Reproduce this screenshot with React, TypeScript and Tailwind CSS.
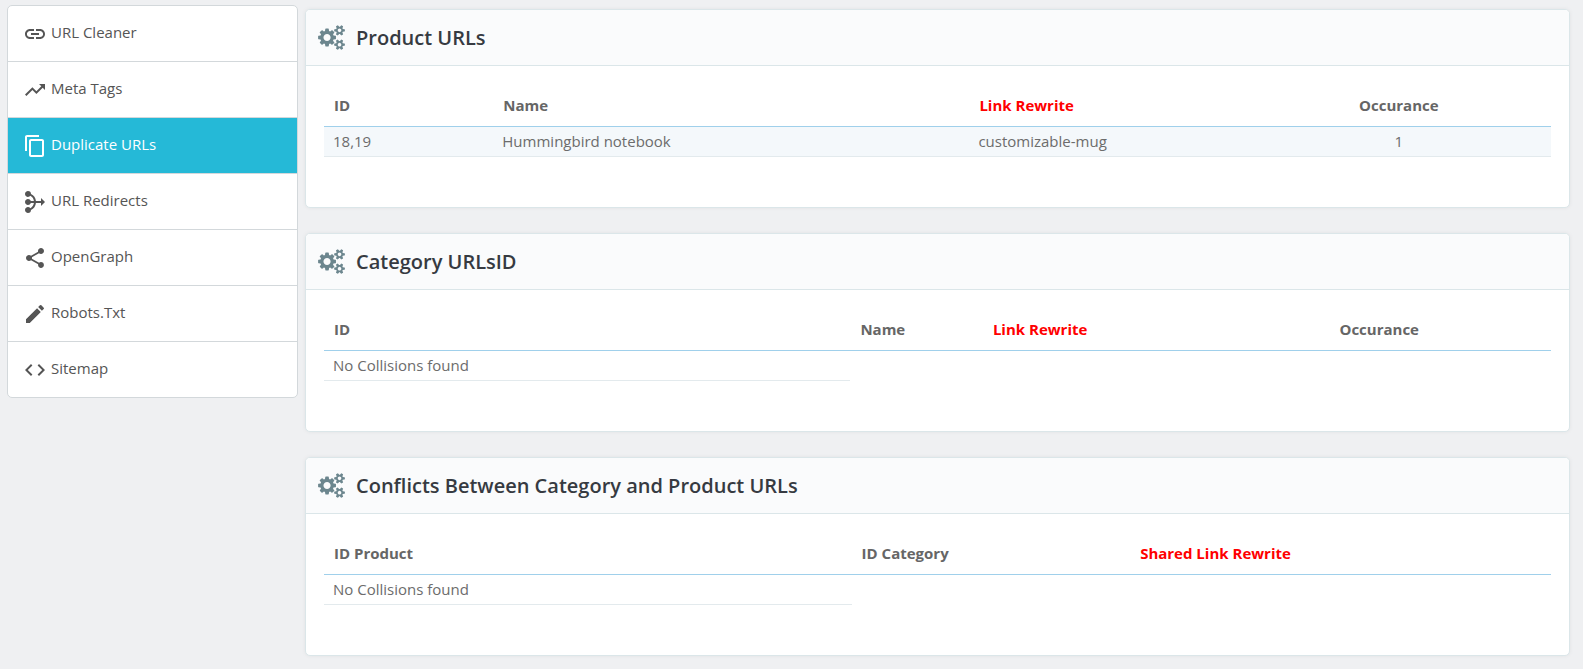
import React from 'react'
import clsx from 'clsx'
import {
  MdLink,
  MdTrendingUp,
  MdContentCopy,
  MdOutlineMediation,
  MdShare,
  MdEdit,
  MdCode,
} from 'react-icons/md'

const menu = [
  { label: 'URL Cleaner', icon: MdLink },
  { label: 'Meta Tags', icon: MdTrendingUp },
  { label: 'Duplicate URLs', icon: MdContentCopy, active: true },
  { label: 'URL Redirects', icon: MdOutlineMediation },
  { label: 'OpenGraph', icon: MdShare },
  { label: 'Robots.Txt', icon: MdEdit },
  { label: 'Sitemap', icon: MdCode },
]

type Column = { title: string; width: string; red?: boolean; center?: boolean }

const productColumns: Column[] = [
  { title: 'ID', width: 'w-[13.8%]' },
  { title: 'Name', width: 'w-[38.8%]' },
  { title: 'Link Rewrite', width: 'w-[22.6%]', red: true },
  { title: 'Occurance', width: 'w-[24.8%]', center: true },
]

const categoryColumns: Column[] = [
  { title: 'ID', width: 'w-[42.9%]' },
  { title: 'Name', width: 'w-[10.8%]' },
  { title: 'Link Rewrite', width: 'w-[18.3%]', red: true },
  { title: 'Occurance', width: 'w-[28%]', center: true },
]

const conflictColumns: Column[] = [
  { title: 'ID Product', width: 'w-[43%]' },
  { title: 'ID Category', width: 'w-[22.7%]' },
  { title: 'Shared Link Rewrite', width: 'w-[34.3%]', red: true },
]

const smallGear =
  'M1664 1408q0-52-38-90t-90-38-90 38-38 90q0 53 37.5 90.5t90.5 37.5 90.5-37.5 37.5-90.5zm256-70v140q0 16-149 31-12 27-30 52 51 113 51 138 0 4-4 7-122 71-124 71-8 0-46-47t-52-68q-20 2-30 2t-30-2q-14 21-52 68t-46 47q-2 0-124-71-4-3-4-7 0-25 51-138-18-25-30-52-149-15-149-31v-140q0-16 149-31 13-29 30-52-51-113-51-138 0-4 4-7 4-2 35-20t59-34 30-16q8 0 46 46.5t52 67.5q20-2 30-2t30 2q51-71 92-112l6-2q4 0 124 70 4 3 4 7 0 25-51 138 17 23 30 52 149 15 149 31z'

const Gears = () => (
  <svg viewBox="0 0 1920 1792" className="h-[25px] w-[27px] shrink-0 fill-[#6c868e]" aria-hidden="true">
    <path
      fillRule="evenodd"
      d="M896 896q0-106-75-181t-181-75-181 75-75 181 75 181 181 75 181-75 75-181zm384-91v185q0 10-7 19.5t-16 10.5l-155 24q-11 35-32 76 34 48 90 115 7 11 7 20 0 12-7 19-23 30-82.5 89.5t-78.5 59.5q-11 0-21-7l-115-90q-37 19-77 31-11 108-23 155-7 24-30 24h-186q-11 0-20-7.5t-10-17.5l-23-153q-34-10-75-31l-118 89q-7 7-20 7-11 0-21-8-144-133-144-160 0-9 7-19 10-14 41-53t47-61q-23-44-35-82l-152-24q-10-1-17-9.5t-7-19.5v-185q0-10 7-19.5t16-10.5l155-24q11-35 32-76-34-48-90-115-7-11-7-20 0-12 7-20 22-30 82-89t79-59q11 0 21 7l115 90q34-18 77-32 11-108 23-154 7-24 30-24h186q11 0 20 7.5t10 17.5l23 153q34 10 75 31l118-89q8-7 20-7 11 0 21 8 144 133 144 160 0 8-7 19-12 16-42 54t-45 60q23 48 34 82l152 23q10 2 17 10.5t7 19.5z"
    />
    <path fillRule="evenodd" d={smallGear} />
    <path fillRule="evenodd" d={smallGear} transform="translate(0 -1024)" />
  </svg>
)

const Panel = ({ title, columns, rows }: { title: string; columns: Column[]; rows: string[][] }) => {
  return (
    <section className="rounded-[5px] border border-[#dbe6e9] bg-white shadow-[0_0_4px_rgba(0,0,0,0.06)]">
      <h2 className="flex h-14 items-center gap-[11px] rounded-t-[4px] border-b border-[#dbe6e9] bg-[#fafbfc] px-3 text-[20px] font-semibold text-[#363a41]">
        <Gears />
        {title}
      </h2>
      <div className="px-[18px] pt-5 pb-[50px]">
        <table className="w-full table-fixed border-separate border-spacing-0 text-[15px] text-[#6c6c6c]">
          <thead>
            <tr>
              {columns.map((col) => (
                <th
                  key={col.title}
                  className={clsx(
                    'h-[41px] border-b border-[#a0d0eb] px-[10px] pb-[2px] font-bold',
                    col.width,
                    col.center ? 'text-center' : 'text-left',
                    col.red ? 'text-[#ff0000]' : 'text-[#666666]',
                  )}
                >
                  {col.title}
                </th>
              ))}
            </tr>
          </thead>
          <tbody>
            {rows.map((row) => (
              <tr key={row[0]}>
                {row.map((cell, i) => (
                  <td
                    key={i}
                    className={clsx(
                      'h-[30px] border-b border-[#e3eaed] px-[9px]',
                      row.length > 1 && 'bg-[#f4f8fb]',
                      columns[i].center && 'text-center',
                    )}
                  >
                    {cell}
                  </td>
                ))}
              </tr>
            ))}
          </tbody>
        </table>
      </div>
    </section>
  )
}

const App = () => {
  return (
    <div className="flex min-h-screen items-start gap-[7px] bg-[#eff0f2] pr-[13px] pl-[7px] font-['Open_Sans',sans-serif]">
      <nav className="mt-[5px] w-[291px] shrink-0 overflow-hidden rounded-[5px] border border-[#d3d8db] bg-white">
        {menu.map(({ label, icon: Icon, active }) => (
          <a
            key={label}
            href="#"
            className={clsx(
              'flex h-14 items-center gap-1 border-b border-[#d3d8db] pl-[15px] text-[15px] last:h-[55px] last:border-b-0',
              active ? 'bg-[#25b9d7] text-white' : 'text-[#555555]',
            )}
          >
            <Icon className="size-6" />
            <span className="pb-[2px]">{label}</span>
          </a>
        ))}
      </nav>
      <main className="flex min-w-0 flex-1 flex-col gap-[25px] pt-[9px]">
        <Panel
          title="Product URLs"
          columns={productColumns}
          rows={[['18,19', 'Hummingbird notebook', 'customizable-mug', '1']]}
        />
        <Panel title="Category URLsID" columns={categoryColumns} rows={[['No Collisions found']]} />
        <Panel
          title="Conflicts Between Category and Product URLs"
          columns={conflictColumns}
          rows={[['No Collisions found']]}
        />
      </main>
    </div>
  )
}

export default App
